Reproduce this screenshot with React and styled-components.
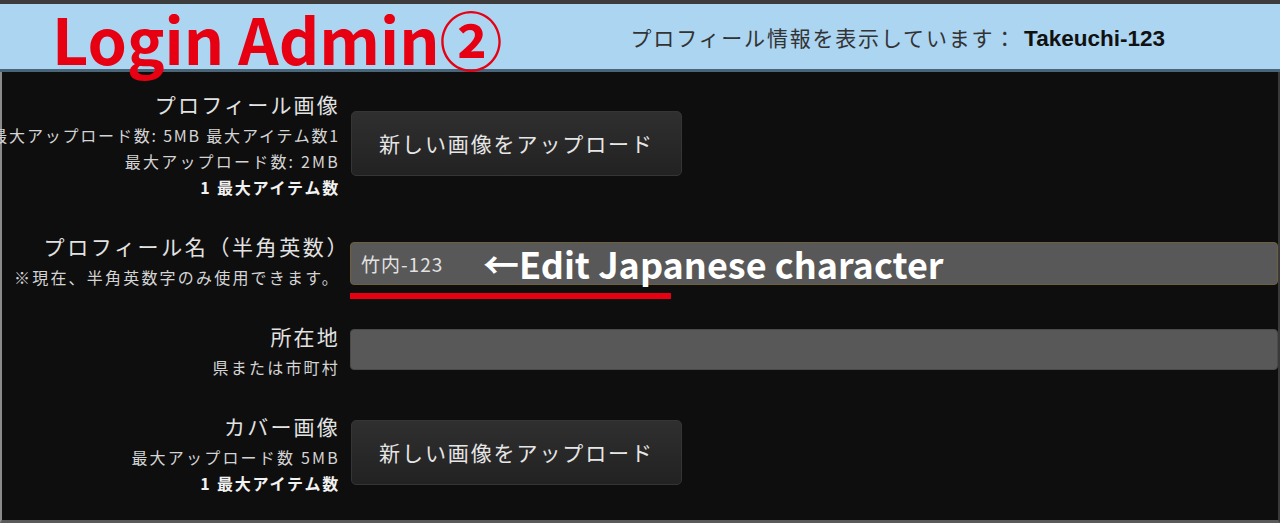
import React from "react";
import styled, { createGlobalStyle } from "styled-components";

const GlobalStyle = createGlobalStyle`
  body {
    margin: 0;
    background: #0e0e0e;
    font-family: "Noto Sans CJK JP", "Noto Sans", sans-serif;
  }
`;

const Page = styled.div`
  width: 1280px;
  height: 523px;
  overflow: hidden;
  display: flex;
  flex-direction: column;
  background: #0e0e0e;
`;

const Header = styled.header`
  flex: none;
  height: 65px;
  border-top: 4px solid #3c3c3c;
  border-bottom: 3px solid #4a6478;
  background: #acd5f2;
  display: flex;
  align-items: center;
  padding: 0 115px 0 52px;
  position: relative;
  z-index: 1;
`;

const Title = styled.h1`
  margin: 2px 0 0;
  align-self: flex-start;
  font-family: "Noto Sans CJK JP", sans-serif;
  font-weight: 700;
  font-size: 63px;
  line-height: 63px;
  color: #e60012;
  white-space: nowrap;
`;

const Info = styled.div`
  margin-left: auto;
  font-size: 21px;
  letter-spacing: 1.8px;
  color: #333;
  white-space: nowrap;
`;

const UserName = styled.b`
  margin-left: 7px;
  font-family: "Liberation Sans", Arial, sans-serif;
  font-weight: 700;
  font-size: 22.5px;
  letter-spacing: 0;
  color: #111;
`;

const Body = styled.main`
  flex: 1;
  border-left: 2px solid #8a8a8a;
  border-right: 2px solid #3a3a3a;
  border-bottom: 3px solid #5a5a5a;
  padding-top: 14px;
  display: flex;
  flex-direction: column;
  gap: 28px;
`;

const Row = styled.div`
  display: grid;
  grid-template-columns: 338px 1fr;
  column-gap: 10px;
  align-items: center;
`;

const LabelBox = styled.div`
  display: flex;
  flex-direction: column;
  align-items: flex-end;
  white-space: nowrap;
`;

const MainLabel = styled.div`
  font-size: 21px;
  line-height: 36px;
  letter-spacing: ${(p) => (p.$trim ? "2.6px" : "2.2px")};
  margin-right: ${(p) => (p.$trim ? -10 : 0)}px;
  color: #e2e2e2;
`;

const SubLabel = styled.div`
  font-size: 16px;
  line-height: 26px;
  letter-spacing: ${(p) => (p.$bold ? "1.8px" : p.$tight ? "1.8px" : "2.2px")};
  font-weight: ${(p) => (p.$bold ? 700 : 400)};
  color: ${(p) => (p.$bold ? "#f2f2f2" : "#d4d4d4")};
`;

const Control = styled.div`
  margin-top: ${(p) => p.$shift || 0}px;
  position: relative;
`;

const UploadButton = styled.button`
  width: 331px;
  height: 65px;
  margin-left: 1px;
  border: 1px solid #353535;
  border-radius: 5px;
  background: linear-gradient(#2f2f2f, #222);
  color: #e6e6e6;
  font-family: "Noto Sans CJK JP", sans-serif;
  font-size: 21px;
  letter-spacing: 1.9px;
  cursor: pointer;
`;

const TextField = styled.div`
  height: ${(p) => p.$h}px;
  box-sizing: border-box;
  border: 1px solid ${(p) => (p.$accent ? "#6f5f3c" : "#4a4a4a")};
  border-radius: 4px;
  background: #585858;
  display: flex;
  align-items: center;
  padding-left: 10px;
  font-size: 19px;
  letter-spacing: 1px;
  color: #e2e2e2;
  position: relative;
`;

const Note = styled.span`
  position: absolute;
  left: 132px;
  top: 50%;
  transform: translateY(-52%);
  font-family: "Noto Sans CJK JP", sans-serif;
  font-weight: 700;
  font-size: 36px;
  letter-spacing: 0;
  line-height: 1;
  color: #fff;
  white-space: nowrap;
`;

const Underline = styled.div`
  position: absolute;
  left: 0;
  top: calc(100% + 8px);
  width: 321px;
  height: 6px;
  background: #e60012;
`;

export default function App() {
  return (
    <>
      <GlobalStyle />
      <Page>
        <Header>
          <Title>Login Admin②</Title>
          <Info>
            プロフィール情報を表示しています：
            <UserName>Takeuchi-123</UserName>
          </Info>
        </Header>
        <Body>
          <Row>
            <LabelBox>
              <MainLabel>プロフィール画像</MainLabel>
              <SubLabel $tight>最大アップロード数: 5MB 最大アイテム数1</SubLabel>
              <SubLabel>最大アップロード数: 2MB</SubLabel>
              <SubLabel $bold>1 最大アイテム数</SubLabel>
            </LabelBox>
            <Control>
              <UploadButton>新しい画像をアップロード</UploadButton>
            </Control>
          </Row>
          <Row>
            <LabelBox>
              <MainLabel $trim>プロフィール名（半角英数）</MainLabel>
              <SubLabel>※現在、半角英数字のみ使用できます。</SubLabel>
            </LabelBox>
            <Control $shift={9}>
              <TextField $h={43} $accent>
                竹内-123
                <Note>←Edit Japanese character</Note>
              </TextField>
              <Underline />
            </Control>
          </Row>
          <Row>
            <LabelBox>
              <MainLabel>所在地</MainLabel>
              <SubLabel>県または市町村</SubLabel>
            </LabelBox>
            <Control>
              <TextField $h={41} />
            </Control>
          </Row>
          <Row>
            <LabelBox>
              <MainLabel>カバー画像</MainLabel>
              <SubLabel>最大アップロード数 5MB</SubLabel>
              <SubLabel $bold>1 最大アイテム数</SubLabel>
            </LabelBox>
            <Control>
              <UploadButton>新しい画像をアップロード</UploadButton>
            </Control>
          </Row>
        </Body>
      </Page>
    </>
  );
}
